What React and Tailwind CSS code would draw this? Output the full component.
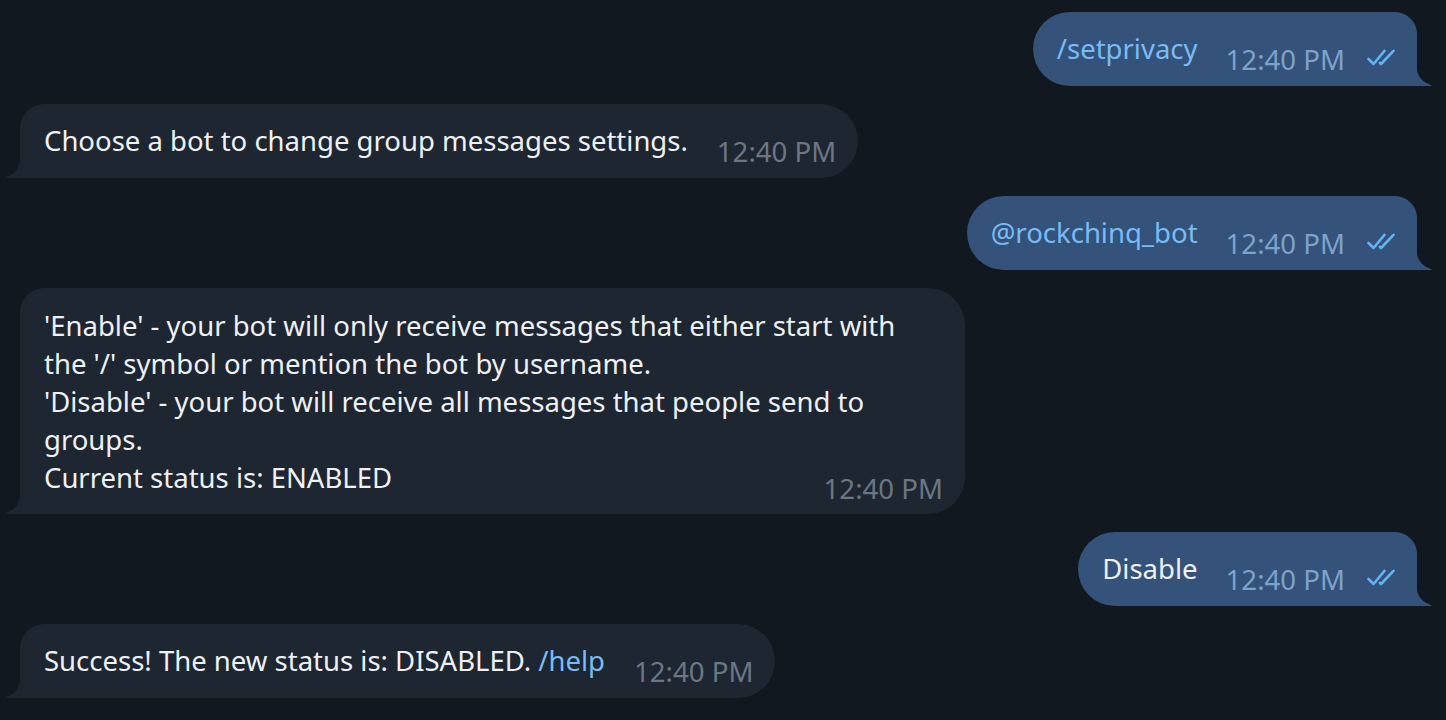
const BG = 'bg-[#121820]';

function TailIn() {
  return (
    <svg className="absolute bottom-0 left-[-16px]" width="17" height="26" viewBox="0 0 17 26">
      <path d="M17 0 C17 14 13 21 3 24.5 Q0.5 25.5 2 26 L17 26 Z" fill="#1e2631" />
    </svg>
  );
}

function TailOut() {
  return (
    <svg className="absolute bottom-0 right-[-16px]" width="17" height="26" viewBox="0 0 17 26">
      <path d="M0 0 C0 14 4 21 14 24.5 Q16.5 25.5 15 26 L0 26 Z" fill="#34527a" />
    </svg>
  );
}

function Checks() {
  return (
    <svg width="29" height="17" viewBox="0 0 29 17" fill="none" stroke="#62b3f5" strokeWidth="2.6" strokeLinecap="round" strokeLinejoin="round">
      <path d="M1.5 10 L6.5 15 L17.5 1.8" />
      <path d="M13 14 L14 15 L26.5 1.8" />
    </svg>
  );
}

function Time({ out }) {
  return (
    <span className={`relative top-[10px] whitespace-nowrap text-[27.6px] leading-[38px] ${out ? 'text-[#7da3cb]' : 'text-[#6c7784]'}`}>
      12:40 PM
    </span>
  );
}

function Outgoing({ children, link }) {
  return (
    <div className="flex justify-end pr-[29px]">
      <div className="relative flex h-[74px] items-center rounded-l-[37px] rounded-tr-[22px] bg-[#34527a] pl-[24px] pr-[21px]">
        <span className={`text-[27.5px] leading-[38px] ${link ? 'text-[#78bcf5]' : 'text-[#eef1f5]'}`}>{children}</span>
        <span className="ml-[28px]"><Time out /></span>
        <span className="relative top-[8px] ml-[22px]"><Checks /></span>
        <TailOut />
      </div>
    </div>
  );
}

function Incoming({ children }) {
  return (
    <div className="flex justify-start pl-[20px]">
      <div className="relative flex h-[74px] items-center rounded-r-[37px] rounded-tl-[24px] bg-[#1e2631] pl-[24px] pr-[22px]">
        <span className="text-[27.5px] leading-[38px] text-[#eef1f5]">{children}</span>
        <span className="ml-[29px]"><Time /></span>
        <TailIn />
      </div>
    </div>
  );
}

export default function App() {
  return (
    <div className={`${BG} flex h-[720px] w-full flex-col gap-[18px] overflow-hidden pt-[12px]`} style={{ fontFamily: '"Noto Sans", "Open Sans", sans-serif' }}>
      <Outgoing link>/setprivacy</Outgoing>
      <Incoming>Choose a bot to change group messages settings.</Incoming>
      <Outgoing link>@rockchinq_bot</Outgoing>

      <div className="flex justify-start pl-[20px]">
        <div className="relative w-[945px] rounded-r-[37px] rounded-tl-[24px] bg-[#1e2631] pb-[17px] pl-[24px] pr-[22px] pt-[19px] text-[27.5px] leading-[38px] text-[#eef1f5]">
          <div className="whitespace-nowrap">'Enable' - your bot will only receive messages that either start with</div>
          <div>the '/' symbol or mention the bot by username.</div>
          <div className="whitespace-nowrap">'Disable' - your bot will receive all messages that people send to</div>
          <div>groups.</div>
          <div className="flex items-end justify-between">
            <span>Current status is: ENABLED</span>
            <Time />
          </div>
          <TailIn />
        </div>
      </div>

      <Outgoing>Disable</Outgoing>
      <Incoming>
        Success! The new status is: DISABLED. <span className="text-[#78bcf5]">/help</span>
      </Incoming>
    </div>
  );
}
